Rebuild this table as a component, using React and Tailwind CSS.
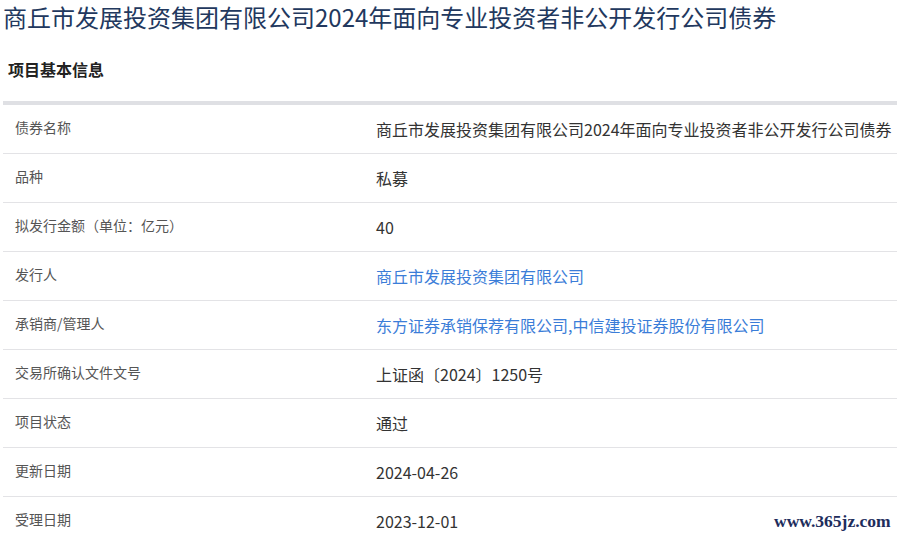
import React from "react";

const rows = [
  { label: "债券名称", value: "商丘市发展投资集团有限公司2024年面向专业投资者非公开发行公司债券" },
  { label: "品种", value: "私募" },
  { label: "拟发行金额（单位：亿元）", value: "40" },
  { label: "发行人", value: "商丘市发展投资集团有限公司", link: true },
  { label: "承销商/管理人", value: "东方证券承销保荐有限公司,中信建投证券股份有限公司", link: true },
  { label: "交易所确认文件文号", value: "上证函〔2024〕1250号" },
  { label: "项目状态", value: "通过" },
  { label: "更新日期", value: "2024-04-26" },
  { label: "受理日期", value: "2023-12-01" },
];

const App = () => {
  return (
    <div
      className="relative w-[897px] h-[536px] overflow-hidden bg-white"
      style={{ fontFamily: '"Noto Sans CJK SC", "Noto Sans", sans-serif' }}
    >
      {/* Title */}
      <h1 className="pl-[3px] h-[33px] leading-[33px] text-[24px] font-normal text-[#22385e] whitespace-nowrap">
        商丘市发展投资集团有限公司2024年面向专业投资者非公开发行公司债券
      </h1>

      {/* Section heading */}
      <h2 className="mt-[24px] mb-[20px] pl-2 h-[24px] leading-[24px] text-[16px] font-bold text-[#222]">
        项目基本信息
      </h2>

      {/* Info table */}
      <div className="ml-[3px] border-t-4 border-[#dfe0e4]">
        {rows.map((row) => (
          <div
            key={row.label}
            className="flex items-center h-[49px] border-b border-[#e3e3e6]"
          >
            <div className="w-[373px] pl-3 pb-[3px] text-[14px] text-[#555]">
              {row.label}
            </div>
            <div
              className={`whitespace-nowrap text-[16px] ${
                row.link ? "text-[#3b7dd8]" : "text-[#333]"
              }`}
            >
              {row.value}
            </div>
          </div>
        ))}
      </div>

      {/* Watermark */}
      <div
        className="absolute left-[774px] top-[508px] text-[17.5px] font-bold text-[#1e2d5c]"
        style={{ fontFamily: '"Liberation Serif", serif' }}
      >
        www.365jz.com
      </div>
    </div>
  );
};

export default App;
